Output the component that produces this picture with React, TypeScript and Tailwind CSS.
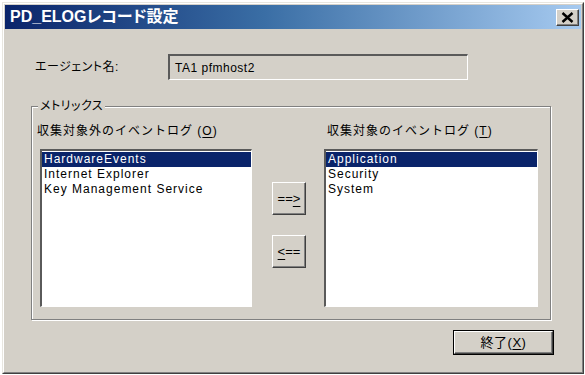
import React from "react";

const jp = "font-['Liberation_Sans','Noto_Sans_CJK_JP',sans-serif]";

function ListBox({ items, width }: { items: string[]; width: string }) {
  return (
    <div
      className={`${width} h-[158px] bg-white border-t-2 border-l-2 border-b border-r border-t-[#5a5a5a] border-l-[#5a5a5a] border-b-white border-r-white shadow-[1px_1px_0_#d4d0c8] pt-[1px]`}
    >
      {items.map((item, i) => (
        <div
          key={item}
          className={`h-[15px] leading-[15px] pl-[2px] text-[12px] tracking-[1px] font-['Liberation_Sans',sans-serif] ${
            i === 0 ? "bg-[#0a246a] text-white" : "text-black"
          }`}
        >
          {item}
        </div>
      ))}
    </div>
  );
}

function Btn({ children, extra = "" }: { children: React.ReactNode; extra?: string }) {
  return (
    <div
      className={`flex items-center justify-center bg-[#d4d0c8] border-t border-l border-b border-r border-t-white border-l-white border-b-[#404040] border-r-[#404040] shadow-[inset_-1px_-1px_0_#808080] text-black ${extra}`}
    >
      {children}
    </div>
  );
}

export default function App() {
  return (
    <div className="w-[585px] h-[375px] bg-white pt-[2px] pl-[2px]">
      <div className="w-[582px] h-[372px] border border-t-[#e8e6e0] border-l-[#e8e6e0] border-b-[#404040] border-r-[#404040]">
        <div className="w-full h-full border border-t-white border-l-white border-b-[#808080] border-r-[#808080] bg-[#d4d0c8] p-[1px] flex flex-col">
          {/* title bar */}
          <div className="h-[24px] flex items-center justify-between pl-[5px] pr-[2px] bg-[linear-gradient(to_right,#0a246a,#3a6ea5_45%,#a6caf0)]">
            <span className={`text-white font-bold text-[16px] leading-none ${jp} [font-feature-settings:'palt']`}>
              PD_ELOGレコード設定
            </span>
            <div className="w-[23px] h-[17px] mt-[1px]">
              <Btn extra="w-full h-full">
                <svg width="13" height="11" viewBox="0 0 13 11">
                  <path d="M1.5 1 L11.5 10 M11.5 1 L1.5 10" stroke="#000" strokeWidth="2.4" />
                </svg>
              </Btn>
            </div>
          </div>

          {/* body */}
          <div className={`flex flex-col flex-1 text-black ${jp}`}>
            <div className="flex items-center mt-[25px]">
              <span className="ml-[30px] w-[133px] text-[12px] leading-none [font-feature-settings:'palt'] tracking-[0.5px]">
                エージェント名:
              </span>
              <div className="w-[300px] h-[26px] flex items-center pl-[5px] border-t-2 border-l-2 border-b border-r border-t-[#5a5a5a] border-l-[#5a5a5a] border-b-white border-r-white shadow-[1px_1px_0_#d4d0c8]">
                <span className="text-[12px] tracking-[0.5px] font-['Liberation_Sans',sans-serif]">TA1 pfmhost2</span>
              </div>
            </div>

            <fieldset className="ml-[26px] mt-[19px] w-[520px] border border-[#808080] shadow-[1px_1px_0_white,inset_1px_1px_0_white] pb-[12px]">
              <legend className="ml-[6px] px-[2px] text-[12px] leading-[14px] bg-[#d4d0c8] [font-feature-settings:'palt'] tracking-[0.5px]">
                メトリックス
              </legend>
              <div className="flex mt-[11px]">
                <div className="flex flex-col ml-[5px] w-[215px]">
                  <span className="h-[14px] text-[12px] leading-[14px] tracking-[1px] whitespace-nowrap">
                    収集対象外のイベントログ (<span className="underline underline-offset-2">O</span>)
                  </span>
                  <div className="mt-[11px] ml-[3px]">
                    <ListBox
                      width="w-[212px]"
                      items={["HardwareEvents", "Internet Explorer", "Key Management Service"]}
                    />
                  </div>
                </div>

                <div className="flex flex-col ml-[20px] w-[34px] pt-[58px] gap-[20px]">
                  <Btn extra="h-[33px] text-[13px] font-['Liberation_Sans',sans-serif]">
                    ==<span className="underline underline-offset-3">&gt;</span>
                  </Btn>
                  <Btn extra="h-[33px] text-[13px] font-['Liberation_Sans',sans-serif]">
                    <span className="underline underline-offset-3">&lt;</span>==
                  </Btn>
                </div>

                <div className="flex flex-col ml-[18px] w-[214px]">
                  <span className="h-[14px] pl-[3px] text-[12px] leading-[14px] tracking-[1px] whitespace-nowrap">
                    収集対象のイベントログ (<span className="underline underline-offset-2">T</span>)
                  </span>
                  <div className="mt-[11px]">
                    <ListBox width="w-[214px]" items={["Application", "Security", "System"]} />
                  </div>
                </div>
              </div>
            </fieldset>

            <div className="ml-[448px] mt-[10px] w-[101px] h-[25px] border border-black">
              <Btn extra="w-full h-full text-[13px] tracking-[0.5px]">
                終了(<span className="underline underline-offset-2">X</span>)
              </Btn>
            </div>
          </div>
        </div>
      </div>
    </div>
  );
}
